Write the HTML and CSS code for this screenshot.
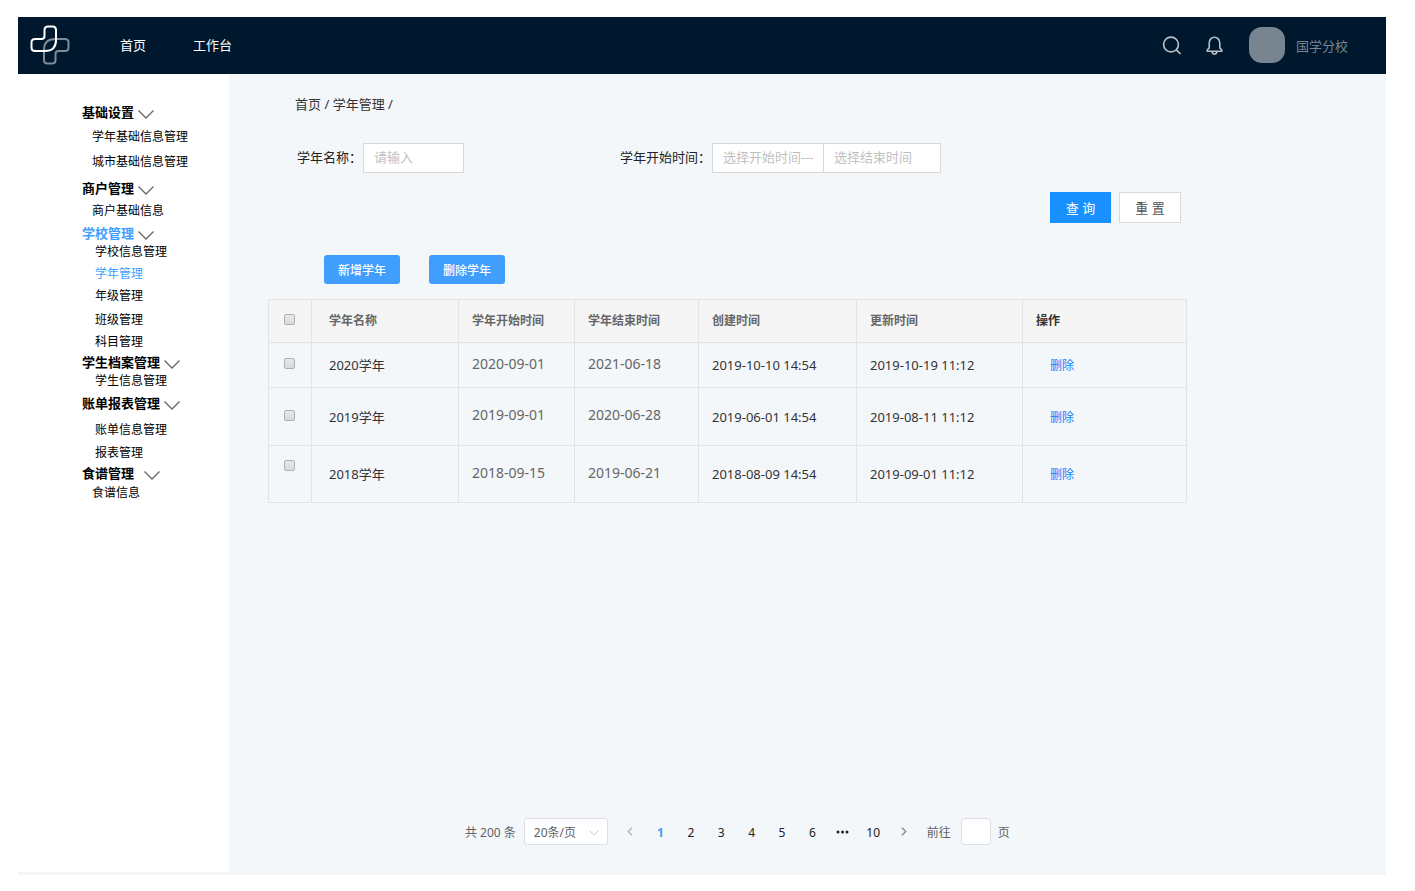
FILE: index.html
```html
<!DOCTYPE html>
<html lang="zh-CN">
<head>
<meta charset="utf-8">
<title>学年管理</title>
<link rel="stylesheet" href="styles.css">
</head>
<body>
<div class="app">
  <header class="topbar">
    <a class="logo" href="#" aria-label="主页">
      <svg width="40" height="40" viewBox="0 0 40 40" fill="none" stroke-width="2">
        <path class="logo-back" transform="rotate(180 20 20)" d="M5 14H11.500Q14.500 14 14.500 11V5Q14.500 1.500 18 1.500H22.500Q26 1.500 26 5V15Q26 26 15 26H5Q1.500 26 1.500 22.500V17.500Q1.500 14 5 14Z"/>
        <path class="logo-front" d="M5 14H11.500Q14.500 14 14.500 11V5Q14.500 1.500 18 1.500H22.500Q26 1.500 26 5V15Q26 26 15 26H5Q1.500 26 1.500 22.500V17.500Q1.500 14 5 14Z"/>
      </svg>
    </a>
    <nav class="topnav">
      <a href="#">首页</a>
      <a href="#">工作台</a>
    </nav>
    <div class="tools">
      <button class="icon-btn" type="button" aria-label="搜索">
        <svg width="20" height="20" viewBox="0 0 20 20" fill="none" stroke="currentColor" stroke-width="1.700"><circle cx="9" cy="9.500" r="7.400"/><path d="M14.300 14.800L18.500 19"/></svg>
      </button>
      <button class="icon-btn" type="button" aria-label="通知">
        <svg width="17" height="20" viewBox="0 0 17 20" fill="none" stroke="currentColor" stroke-width="1.600"><path d="M3.200 13V8A5.300 5.800 0 0 1 13.800 8V13L15.700 14.800V16.200H1.300V14.800Z"/><path d="M5.800 16.500Q6.500 19 8.500 19T11.200 16.500"/></svg>
      </button>
      <span class="avatar"></span>
      <span class="user">国学分校</span>
    </div>
  </header>

  <div class="body">
    <aside class="sidebar">
      <section class="group">
        <button class="group-title" type="button">基础设置<svg class="chev" viewBox="0 0 16 9"><path d="M.500.500L8 8L15.500.500"/></svg></button>
        <ul class="items items-wide"><li><a href="#">学年基础信息管理</a></li><li><a href="#">城市基础信息管理</a></li></ul>
      </section>
      <section class="group group-far">
        <button class="group-title" type="button">商户管理<svg class="chev" viewBox="0 0 16 9"><path d="M.500.500L8 8L15.500.500"/></svg></button>
        <ul class="items items-near"><li><a href="#">商户基础信息</a></li></ul>
      </section>
      <section class="group">
        <button class="group-title active" type="button">学校管理<svg class="chev" viewBox="0 0 16 9"><path d="M.500.500L8 8L15.500.500"/></svg></button>
        <ul class="items items-deep"><li><a href="#">学校信息管理</a></li><li><a class="active" href="#">学年管理</a></li><li><a href="#">年级管理</a></li><li class="spaced"><a href="#">班级管理</a></li><li><a href="#">科目管理</a></li></ul>
      </section>
      <section class="group group-tight">
        <button class="group-title" type="button">学生档案管理<svg class="chev" viewBox="0 0 16 9"><path d="M.500.500L8 8L15.500.500"/></svg></button>
        <ul class="items items-deep"><li><a href="#">学生信息管理</a></li></ul>
      </section>
      <section class="group">
        <button class="group-title" type="button">账单报表管理<svg class="chev" viewBox="0 0 16 9"><path d="M.500.500L8 8L15.500.500"/></svg></button>
        <ul class="items items-deep items-open"><li><a href="#">账单信息管理</a></li><li><a href="#">报表管理</a></li></ul>
      </section>
      <section class="group group-tight">
        <button class="group-title title-loose" type="button">食谱管理<svg class="chev" viewBox="0 0 16 9"><path d="M.500.500L8 8L15.500.500"/></svg></button>
        <ul class="items items-close"><li><a href="#">食谱信息</a></li></ul>
      </section>
    </aside>

    <main class="main">
      <nav class="crumbs"><a href="#">首页</a> / <a href="#">学年管理</a> /</nav>

      <form class="search">
        <div class="fields">
          <div class="field">
            <label for="name">学年名称：</label>
            <input class="box box-name" id="name" type="text" placeholder="请输入">
          </div>
          <div class="field">
            <label for="start">学年开始时间：</label>
            <input class="box box-start" id="start" type="text" placeholder="选择开始时间---">
            <input class="box box-end" type="text" aria-label="结束时间" placeholder="选择结束时间">
          </div>
        </div>
        <div class="submit">
          <button class="btn btn-query" type="button">查 询</button>
          <button class="btn btn-reset" type="reset">重 置</button>
        </div>
      </form>

      <div class="actions">
        <button class="btn-action" type="button">新增学年</button>
        <button class="btn-action" type="button">删除学年</button>
      </div>

      <table class="grid">
        <colgroup><col class="c-check"><col class="c-name"><col class="c-start"><col class="c-end"><col class="c-created"><col class="c-updated"><col></colgroup>
        <thead>
          <tr><th class="check"><input type="checkbox" aria-label="全选"></th><th class="name">学年名称</th><th>学年开始时间</th><th>学年结束时间</th><th>创建时间</th><th>更新时间</th><th class="ops">操作</th></tr>
        </thead>
        <tbody>
          <tr class="row-short"><td class="check"><input type="checkbox" aria-label="2020学年"></td><td class="name">2020学年</td><td class="date">2020-09-01</td><td class="date">2021-06-18</td><td>2019-10-10 14:54</td><td>2019-10-19 11:12</td><td class="op"><a href="#">删除</a></td></tr>
          <tr><td class="check"><input type="checkbox" aria-label="2019学年"></td><td class="name">2019学年</td><td class="date">2019-09-01</td><td class="date">2020-06-28</td><td>2019-06-01 14:54</td><td>2019-08-11 11:12</td><td class="op"><a href="#">删除</a></td></tr>
          <tr class="row-last"><td class="check check-high"><input type="checkbox" aria-label="2018学年"></td><td class="name">2018学年</td><td class="date">2018-09-15</td><td class="date">2019-06-21</td><td>2018-08-09 14:54</td><td>2019-09-01 11:12</td><td class="op"><a href="#">删除</a></td></tr>
        </tbody>
      </table>

      <div class="pager">
        <span class="total">共 200 条</span>
        <span class="size">
          <select aria-label="每页条数"><option>20条/页</option></select>
          <svg width="10" height="6" viewBox="0 0 10 6" fill="none" stroke="currentColor"><path d="M.500.500L5 5L9.500.500"/></svg>
        </span>
        <div class="pages">
          <button class="arrow" type="button" aria-label="上一页"><svg width="6" height="9" viewBox="0 0 6 9" fill="none" stroke="currentColor" stroke-width="1.500"><path d="M5 .800L1.300 4.500L5 8.200"/></svg></button>
          <button class="current" type="button">1</button>
          <button type="button">2</button>
          <button type="button">3</button>
          <button type="button">4</button>
          <button type="button">5</button>
          <button type="button">6</button>
          <button class="arrow dots" type="button" aria-label="更多"><svg width="13" height="4" viewBox="0 0 13 4" fill="currentColor"><circle cx="2" cy="2" r="1.500"/><circle cx="6.500" cy="2" r="1.500"/><circle cx="11" cy="2" r="1.500"/></svg></button>
          <button type="button">10</button>
          <button class="arrow arrow-next" type="button" aria-label="下一页"><svg width="6" height="9" viewBox="0 0 6 9" fill="none" stroke="currentColor" stroke-width="1.500"><path d="M1 .800L4.700 4.500L1 8.200"/></svg></button>
        </div>
        <label class="jump"><span>前往</span><input type="text"><span>页</span></label>
      </div>
    </main>
  </div>
</div>
</body>
</html>
```

FILE: styles.css
```css
* { box-sizing: border-box; }

body {
  margin: 0;
  padding: 17px 29px 16px 18px;
  background: #fff;
  color: #333;
  font: 13px/20px "Noto Sans", "Noto Sans CJK SC", sans-serif;
}

a { color: inherit; text-decoration: none; }

button, input, select {
  margin: 0;
  font: inherit;
  color: inherit;
}

button {
  padding: 0;
  border: 0;
  background: none;
  cursor: pointer;
}

.app {
  display: flex;
  flex-direction: column;
  min-height: calc(100vh - 33px);
  background: #f3f7fa;
}

/* Top bar */
.topbar {
  display: flex;
  align-items: center;
  height: 57px;
  padding: 0 38px 2px 12px;
  background: #00182d;
  color: #fff;
}

.logo, .logo svg { display: block; }
.logo-front { stroke: #fff; }
.logo-back { stroke: #7f8b96; }

.topnav {
  display: flex;
  gap: 47px;
  margin-left: 50px;
}

.tools {
  display: flex;
  align-items: center;
  margin-left: auto;
}

.icon-btn {
  margin-right: 24px;
  color: #b8c0c7;
}

.icon-btn + .icon-btn { margin-right: 26px; }
.icon-btn svg { display: block; }

.avatar {
  width: 36px;
  height: 36px;
  margin-right: 11px;
  border-radius: 13px;
  background: #78848f;
}

.user {
  padding-top: 2px;
  color: #78848f;
}

/* Sidebar */
.body {
  display: flex;
  flex: 1;
}

.sidebar {
  flex: none;
  width: 211px;
  margin-bottom: 3px;
  padding: 30px 0 30px 64px;
  background: #fff;
  color: #000;
  line-height: 16px;
}

.group { margin-top: 6px; }
.group:first-child { margin-top: 0; }
.group-far { margin-top: 10px; }
.group-tight { margin-top: 4px; }

.group-title {
  display: flex;
  align-items: center;
  gap: 4px;
  height: 16px;
  font-weight: bold;
  line-height: 16px;
}

.title-loose { gap: 10px; }

.chev {
  width: 16px;
  height: 9px;
  margin-top: 4px;
  fill: none;
  stroke: #666;
  stroke-width: 1.3;
}

.items {
  display: flex;
  flex-direction: column;
  gap: 6px;
  margin: 0;
  padding: 0 0 0 10px;
  list-style: none;
  font-size: 12px;
}

.items a { display: block; }
.items-wide { gap: 9px; padding-top: 9px; }
.items-near { padding-top: 7px; }
.items-deep { padding-top: 3px; padding-left: 13px; }
.items-close { padding-top: 4px; }
.items-open { gap: 7px; padding-top: 11px; }
.spaced { margin-top: 2px; }
.active { color: #409eff; }

/* Main column */
.main {
  display: flex;
  flex: 1;
  flex-direction: column;
  min-width: 0;
  padding: 20px 199px 30px 39px;
}

.crumbs { padding-left: 27px; }

.fields {
  display: flex;
  gap: 156px;
  margin-top: 29px;
  padding-left: 29px;
}

.field {
  display: flex;
  align-items: center;
  color: #222;
}

.field label {
  margin-right: 1px;
  padding-bottom: 2px;
  white-space: nowrap;
}

.box {
  height: 30px;
  padding: 0 0 2px 10px;
  border: 1px solid #d9d9d9;
  background: #fff;
}

.box::placeholder { color: #bfbfbf; }
.box-name { width: 101px; }
.box-start { width: 112px; }
.box-end { width: 118px; margin-left: -1px; }

.submit {
  display: flex;
  justify-content: flex-end;
  gap: 8px;
  margin-top: 19px;
  padding-right: 6px;
}

.btn {
  width: 62px;
  height: 31px;
}

.btn-query { width: 61px; background: #1890ff; color: #fff; }
.btn-reset { border: 1px solid #d9d9d9; background: #fff; color: #555; }

.actions {
  display: flex;
  gap: 29px;
  margin-top: 32px;
  padding-left: 56px;
}

.btn-action {
  width: 76px;
  height: 29px;
  padding-top: 2px;
  border-radius: 3px;
  background: #409eff;
  color: #fff;
  font-size: 12px;
  font-weight: 500;
}

/* Table */
.grid {
  width: 100%;
  margin-top: 15px;
  border-collapse: collapse;
  table-layout: fixed;
}

.c-check { width: 43px; }
.c-name { width: 147px; }
.c-start { width: 116px; }
.c-end { width: 124px; }
.c-created { width: 158px; }
.c-updated { width: 166px; }

.grid th, .grid td {
  height: 58px;
  padding: 0 0 0 13px;
  border: 1px solid #e3e3e3;
  text-align: left;
  white-space: nowrap;
}

.grid th {
  height: 43px;
  background: #f5f5f5;
  color: #666;
  font-size: 12px;
}

.grid .row-short td { height: 45px; }
.grid .row-last td { height: 57px; }
.grid .name { padding-left: 17px; }
.grid .ops { color: #333; }
.grid .date { padding-bottom: 3px; color: #666; font-size: 14px; }
.grid .op { padding-top: 2px; padding-left: 27px; color: #1080ff; font-size: 12px; }
.grid .check { padding: 0 0 3px 15px; }
.grid .check-high { padding-bottom: 18px; }

.grid input {
  display: block;
  width: 11px;
  height: 11px;
  appearance: none;
  border: 1px solid #b0b0b0;
  border-radius: 2px;
  background: linear-gradient(#e8e8e8, #d9d9d9);
}

/* Pager */
.pager {
  display: flex;
  align-items: center;
  margin-top: auto;
  padding-left: 197px;
  color: #606266;
  font-size: 12px;
  white-space: nowrap;
}

.total, .jump span { padding-top: 2px; }

.size {
  position: relative;
  width: 84px;
  height: 27px;
  margin: 0 7px 0 8px;
}

.size select {
  width: 100%;
  height: 100%;
  padding: 2px 0 0 9px;
  appearance: none;
  border: 1px solid #dcdfe6;
  border-radius: 3px;
  background: #fff;
}

.size svg {
  position: absolute;
  top: 12px;
  right: 9px;
  color: #c8ccd4;
  pointer-events: none;
}

.pages {
  display: grid;
  flex: 0 0 304px;
  grid-template-columns: repeat(10, 1fr);
  color: #222;
}

.pages button {
  display: flex;
  align-items: center;
  justify-content: center;
  height: 27px;
  padding-top: 2px;
}

.pages .current { color: #409eff; font-weight: bold; }
.pages .arrow { padding-top: 0; color: #b4b8bf; }
.pages .arrow-next { color: #8b8f96; }
.pages .dots { color: #222; }

.jump {
  display: flex;
  align-items: center;
  margin-left: 8px;
}

.jump input {
  width: 30px;
  height: 27px;
  margin: 0 7px 0 10px;
  border: 1px solid #dcdfe6;
  border-radius: 4px;
  background: #fff;
}
```
